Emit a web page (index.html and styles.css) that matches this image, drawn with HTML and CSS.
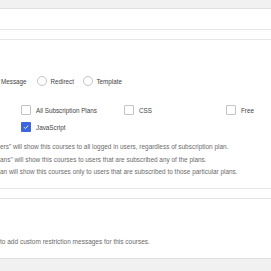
FILE: index.html
```html
<!DOCTYPE html>
<html lang="en">
<head>
    <meta charset="UTF-8">
    <meta name="viewport" content="width=device-width, initial-scale=1.0">
    <title>Course Restriction</title>
    <link rel="stylesheet" href="styles.css">
</head>
<body>
    <div class="topbar"></div>
    <div class="pole"></div>
    <div class="pole-maly"></div>

    <div class="radio-rzad">
        <span class="etykieta">Message</span>
        <label class="opcja"><span class="radio"></span>Redirect</label>
        <label class="opcja"><span class="radio"></span>Template</label>
    </div>

    <div class="plany">
        <label class="plan"><span class="kratka"></span>All Subscription Plans</label>
        <label class="plan"><span class="kratka"></span>CSS</label>
        <label class="plan"><span class="kratka"></span>Free</label>
        <label class="plan"><span class="kratka zaznaczona">
            <svg viewBox="0 0 10 10" width="10" height="10"><path d="M3 5.2 L4.4 6.6 L7.2 3.6" fill="none" stroke="#fff" stroke-width="0.9"/></svg>
        </span>JavaScript</label>
    </div>

    <div class="opis">
        <p>ers" will show this courses to all logged in users, regardless of subscription plan.</p>
        <p>ans" will show this courses to users that are subscribed any of the plans.</p>
        <p>an will show this courses only to users that are subscribed to those particular plans.</p>
    </div>

    <div class="linia"></div>
    <div class="linia-dolna"></div>

    <p class="info">to add custom restriction messages for this courses.</p>

    <div class="stopka"></div>
</body>
</html>
```

FILE: styles.css
```css
body {
    font-family: "Liberation Sans", Arial, sans-serif;
    margin: 0;
    width: 271px;
    height: 271px;
    overflow: hidden;
    background-color: #fff;
    color: #444;
}

.topbar {
    height: 8px;
    background-color: #f1f1f1;
    border-bottom: 1px solid #e0e0e0;
}

.pole {
    height: 20px;
    border-bottom: 1px solid #e6e6e6;
}

.pole-maly {
    height: 9px;
    border-bottom: 1px solid #e6e6e6;
}

.radio-rzad {
    display: flex;
    align-items: center;
    height: 10px;
    margin-top: 36px;
    padding-left: 1px;
    font-size: 6.3px;
}

.etykieta {
    margin-right: 10.4px;
}

.opcja {
    display: flex;
    align-items: center;
    gap: 3.5px;
    margin-right: 9px;
}

.radio {
    width: 8px;
    height: 8px;
    border: 1px solid #c4c4c4;
    border-radius: 50%;
}

.plany {
    display: grid;
    grid-template-columns: 103px 102px 45px;
    row-gap: 7px;
    margin-top: 19px;
    padding-left: 21px;
    font-size: 6.3px;
}

.plan {
    display: flex;
    align-items: center;
    gap: 5px;
    height: 10px;
}

.kratka {
    width: 8px;
    height: 8px;
    border: 1px solid #c4c4c4;
    border-radius: 1px;
}

.kratka.zaznaczona {
    width: 10px;
    height: 10px;
    border: none;
    background-color: #3e64de;
}

.kratka svg {
    display: block;
}

.opis {
    margin-top: 9px;
    font-size: 6.45px;
    color: #6b6b6b;
}

.opis p {
    margin: 0;
    line-height: 12.5px;
    white-space: nowrap;
}

.linia {
    margin-top: 9px;
    border-top: 1px solid #e6e6e6;
    height: 9px;
}

.linia-dolna {
    border-top: 1px solid #e6e6e6;
}

.info {
    margin: 37px 0 0;
    line-height: 12px;
    font-size: 6.5px;
    color: #6b6b6b;
    white-space: nowrap;
}

.stopka {
    margin-top: 10px;
    height: 20px;
    background-color: #f1f1f1;
    border-top: 1px solid #e0e0e0;
}
```
